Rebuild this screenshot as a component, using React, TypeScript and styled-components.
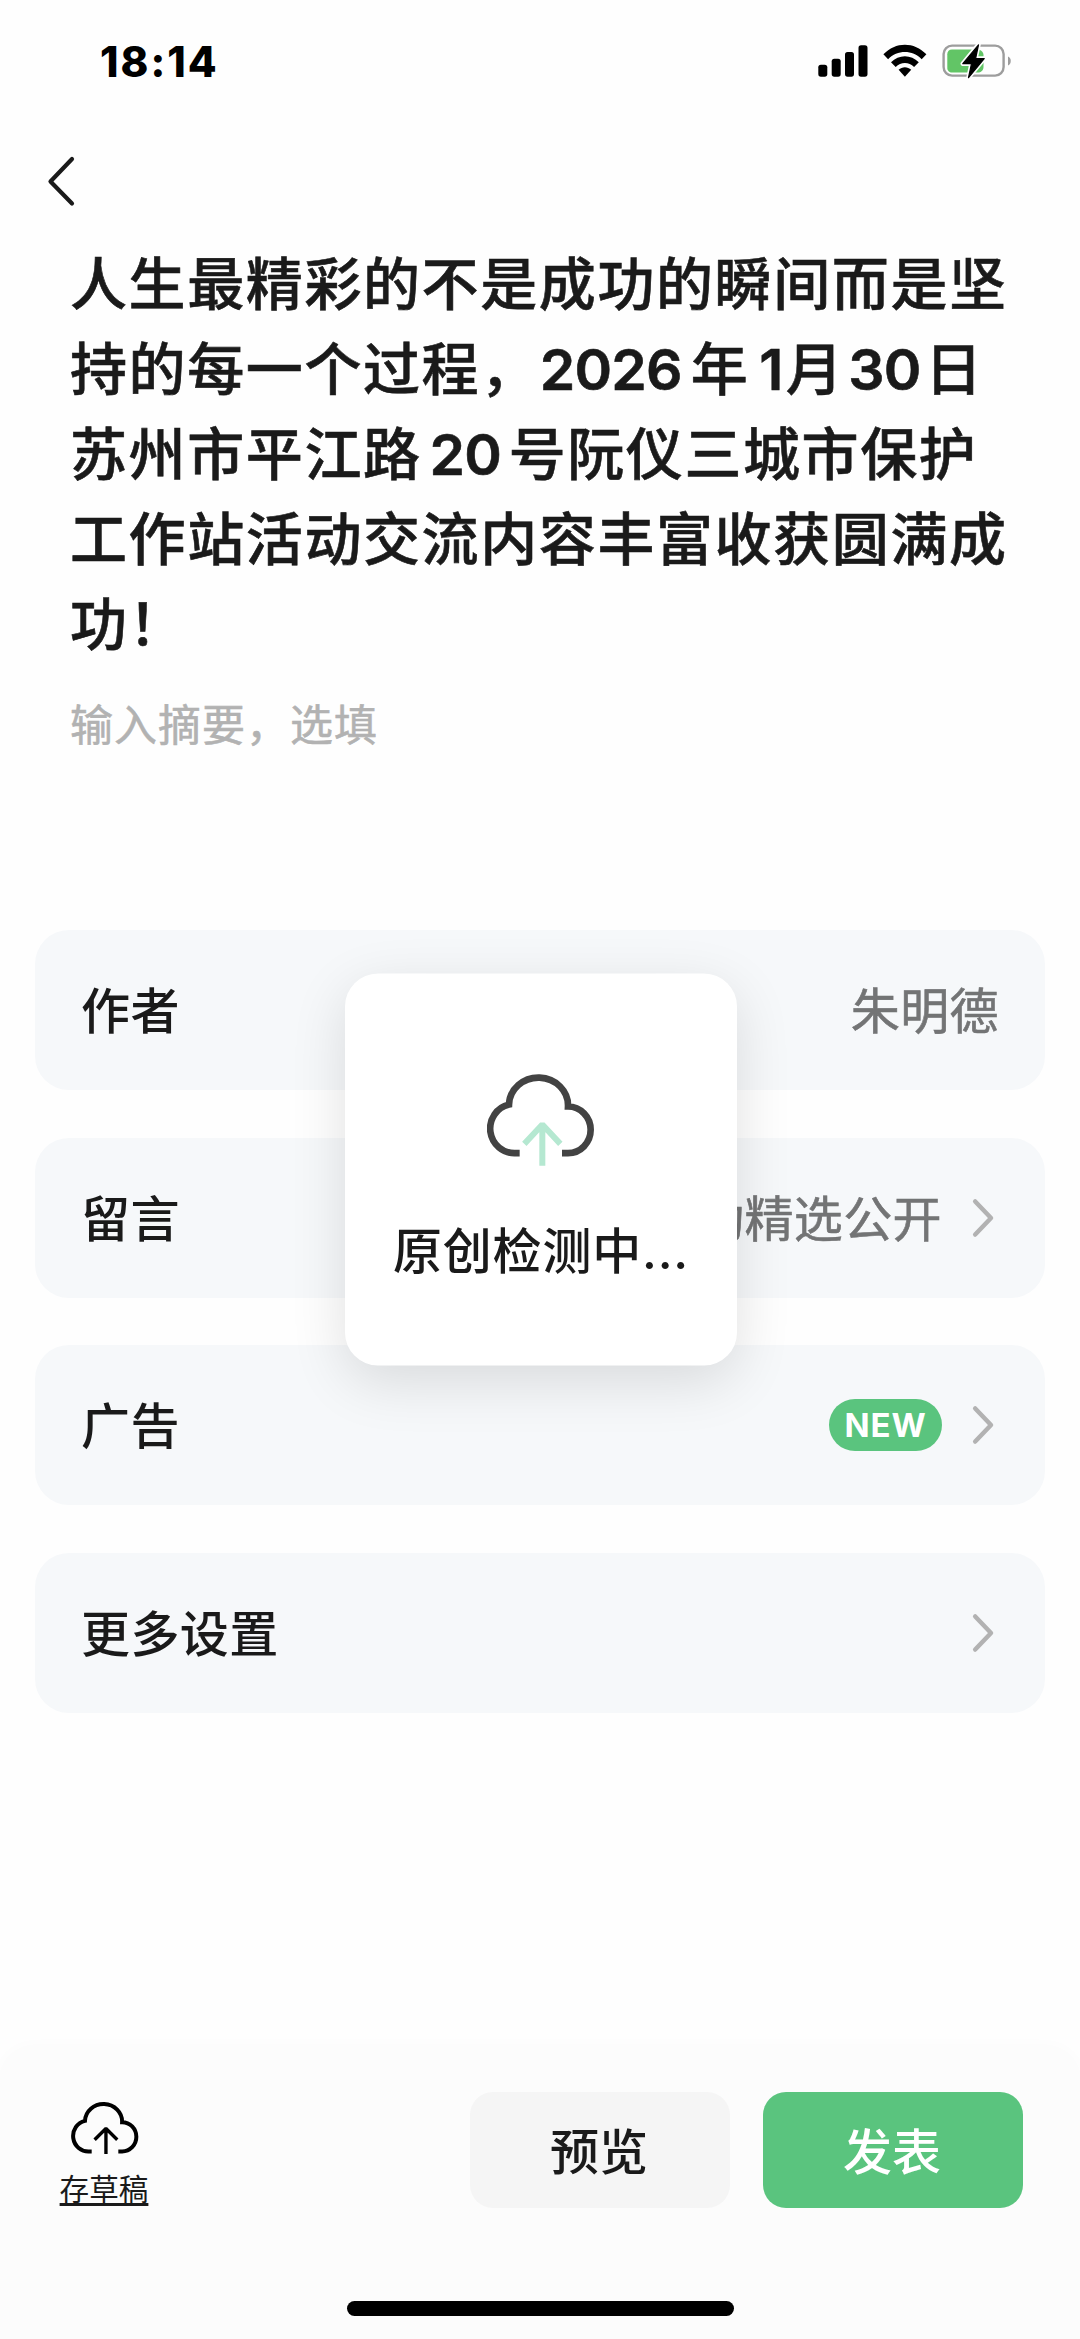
import React from "react";
import styled, { createGlobalStyle } from "styled-components";

const GlobalStyle = createGlobalStyle`
  * { box-sizing: border-box; }
  body {
    margin: 0;
    background: #fefefe;
    font-family: Inter, "Noto Sans CJK SC", sans-serif;
    color: #1a1a1a;
  }
`;

const Page = styled.div`
  position: relative;
  display: flex;
  flex-direction: column;
  width: 1080px;
  height: 2339px;
  overflow: hidden;
  background: #fefefe;
`;

const StatusBar = styled.header`
  display: flex;
  justify-content: space-between;
  height: 122px;
  padding: 44px 68px 0 100px;
  color: #000;
`;

const Clock = styled.time`
  font-size: 42px;
  font-weight: 800;
  line-height: 35px;
  letter-spacing: 2px;
`;

const StatusIcons = styled.div`
  display: flex;
  align-items: flex-start;
  gap: 15px;
`;

const NavBar = styled.nav`
  display: flex;
  height: 119.5px;
  padding: 33px 0 0 46px;
`;

const Article = styled.section`
  padding: 0 60px 0 70px;
  height: 688.5px;
`;

const Title = styled.h1`
  margin: 0;
  font-size: 57px;
  font-weight: 500;
  line-height: 85.2px;
  letter-spacing: 1.6px;
  white-space: nowrap;
  -webkit-text-stroke: 0.6px currentColor;
`;

const Digits = styled.span<{ $before?: number; $after?: number }>`
  font-weight: 600;
  letter-spacing: -0.8px;
  margin-left: ${(p) => p.$before ?? 0}px;
  margin-right: ${(p) => p.$after ?? 0}px;
`;

const Summary = styled.p`
  margin: 27px 0 0;
  font-size: 43px;
  line-height: 60px;
  letter-spacing: 1px;
  color: #b2b2b2;
  -webkit-text-stroke: 0.6px currentColor;
`;

const Settings = styled.ul`
  display: flex;
  flex-direction: column;
  gap: 47.6px;
  margin: 0;
  padding: 0 35px;
  list-style: none;
`;

const Row = styled.li<{ $plain?: boolean }>`
  display: flex;
  align-items: center;
  height: 160px;
  padding: 0 ${(p) => (p.$plain ? 46 : 50)}px 0 46px;
  border-radius: 34px;
  background: #f6f8fa;
  font-size: 49px;
  letter-spacing: 0.4px;
  line-height: 70px;
`;

const RowLabel = styled.span`
  flex: 1;
  padding-top: 4px;
  font-weight: 500;
`;

const RowValue = styled.span`
  padding-top: 4px;
  color: #737475;
  -webkit-text-stroke: 0.6px currentColor;
`;

const Badge = styled.span`
  display: flex;
  align-items: center;
  justify-content: center;
  width: 113px;
  height: 52px;
  border-radius: 26px;
  background: #5ac47e;
  color: #fff;
  font-size: 33px;
  font-weight: 650;
  letter-spacing: 0.8px;
`;

const RowChevron = styled.svg`
  width: 24px;
  height: 42px;
  margin-left: 29px;
`;

const Footer = styled.footer`
  display: flex;
  align-items: flex-start;
  height: 291px;
  margin-top: auto;
  padding: 44px 57px 0 59px;
  border-radius: 34px 34px 0 0;
  background: #fcfcfc;
  box-shadow: 0 -2px 16px rgba(0, 0, 0, 0.02);
`;

const DraftButton = styled.div`
  display: flex;
  flex-direction: column;
  align-items: center;
  width: 90px;
  padding-top: 9px;
  margin-right: auto;

  svg {
    margin-left: 2px;
  }
`;

const DraftLabel = styled.span`
  margin-top: 14px;
  font-size: 29.6px;
  line-height: 40px;
  text-decoration: underline;
  text-decoration-thickness: 2.6px;
  text-underline-offset: 2.5px;
  text-decoration-skip-ink: none;
`;

const ActionButton = styled.button<{ $primary?: boolean }>`
  width: 260px;
  height: 116px;
  margin-left: ${(p) => (p.$primary ? 33 : 0)}px;
  padding: 0 2px 4px 0;
  border: 0;
  border-radius: 23px;
  background: ${(p) => (p.$primary ? "#5ac47e" : "#f5f5f5")};
  color: ${(p) => (p.$primary ? "#fff" : "#1a1a1a")};
  font-family: inherit;
  font-size: 49px;
  font-weight: 500;
`;

const HomeIndicator = styled.div`
  position: absolute;
  left: 347px;
  bottom: 23px;
  width: 387px;
  height: 15px;
  border-radius: 8px;
  background: #000;
`;

const Toast = styled.div`
  position: absolute;
  left: 50%;
  top: 50%;
  transform: translate(-195px, -196.5px);
  display: flex;
  flex-direction: column;
  align-items: center;
  width: 392px;
  height: 392px;
  padding-top: 100px;
  border-radius: 33px;
  background: #fff;
  box-shadow: 0 16px 56px rgba(0, 0, 0, 0.12);
`;

const ToastText = styled.div`
  margin-top: 48px;
  font-size: 49px;
  font-weight: 500;
  line-height: 72px;
  letter-spacing: 0.8px;
  white-space: nowrap;
`;

const CLOUD =
  "M178 308H166A73 74 0 0 1 146 162A88 83 0 0 1 323 168A67 69 0 0 1 323 308H305";

function CloudLarge() {
  return (
    <svg width="108" height="94" viewBox="80 69 324 282" fill="none">
      <path d={CLOUD} stroke="#434343" strokeWidth="20" />
      <path
        d="M246 346V222M192 280L246 222L300 280"
        stroke="#b5e8d1"
        strokeWidth="18"
        strokeLinejoin="bevel"
      />
    </svg>
  );
}

function CloudSmall() {
  return (
    <svg width="68" height="54" viewBox="79.4 67.2 324.2 257.4" fill="none">
      <path d={CLOUD} stroke="#000" strokeWidth="19" />
      <path
        d="M246 320V200M192 252L246 198L300 252"
        stroke="#000"
        strokeWidth="16"
        strokeLinejoin="bevel"
      />
    </svg>
  );
}

function Chevron() {
  return (
    <RowChevron viewBox="0 0 24 42" fill="none">
      <path
        d="M4.200 4.500L20 21L4.200 37.500"
        stroke="#b2b2b2"
        strokeWidth="4.5"
        strokeLinecap="round"
        strokeLinejoin="round"
      />
    </RowChevron>
  );
}

function Signal() {
  return (
    <svg width="50" height="34" viewBox="0 0 50 34">
      <rect x="0.3" y="20.7" width="9" height="12" rx="2.6" />
      <rect x="13.7" y="14.7" width="9" height="18" rx="2.6" />
      <rect x="27" y="8" width="9" height="24.7" rx="2.6" />
      <rect x="40.5" y="1.3" width="9" height="31.4" rx="2.6" />
    </svg>
  );
}

function Wifi() {
  return (
    <svg width="44" height="34" viewBox="0 0 44 34">
      <path d="M0.4 10.3C12.4-2.6 31.4-2.6 43.4 10.3L38.7 15.2C29.6 5.5 14.2 5.5 5.1 15.2Z" />
      <path d="M8 18.2C15.7 10.1 28.1 10.1 35.8 18.2L31.1 23C26 17.7 17.8 17.7 12.7 23Z" />
      <path d="M15.6 25.8C19.2 22.4 24.6 22.4 28.2 25.8L21.9 32.7Z" />
    </svg>
  );
}

function Battery() {
  return (
    <svg width="70" height="36" viewBox="0 0 70 36">
      <rect x="1.6" y="1.6" width="60" height="30" rx="8.5" fill="none" stroke="#9d9d9d" strokeWidth="2.4" />
      <path d="M66 12.5C69.7 14 69.7 20 66 21.5Z" fill="#9d9d9d" />
      <path
        d="M10 5.5H35.5C39 5.5 41.5 8 41.5 11V23C41.5 26.5 39 28.6 35.5 28.6H10C7.2 28.6 5.3 26.5 5.3 24V10.2C5.3 7.5 7.2 5.5 10 5.5Z"
        fill="#62c566"
      />
      <path
        d="M36.5 0.5L20.8 19.7H29.5L26.5 33.7L42.2 14.5H33.6Z"
        fill="#fefefe"
        stroke="#fefefe"
        strokeWidth="4.5"
        strokeLinejoin="round"
      />
      <path
        d="M36.5 0.9L20.8 19.7H29.5L26.5 33.7L42.2 14.5H33.6Z"
        fill="#000"
        stroke="#000"
        strokeWidth="1.2"
        strokeLinejoin="round"
      />
    </svg>
  );
}

export default function App() {
  return (
    <>
      <GlobalStyle />
      <Page>
        <StatusBar>
          <Clock>18:14</Clock>
          <StatusIcons>
            <Signal />
            <Wifi />
            <Battery />
          </StatusIcons>
        </StatusBar>
        <NavBar>
          <svg width="30" height="52" viewBox="0 0 30 52" fill="none">
            <path
              d="M26 4L4.5 26.5L26 48.5"
              stroke="#1a1a1a"
              strokeWidth="4.2"
              strokeLinecap="round"
              strokeLinejoin="round"
            />
          </svg>
        </NavBar>
        <Article>
          <Title>
            人生最精彩的不是成功的瞬间而是坚
            <br />
            持的每一个过程，<Digits $before={1} $after={9}>2026</Digits>年
            <Digits $before={10} $after={3}>1</Digits>月
            <Digits $before={4} $after={4.5}>30</Digits>日
            <br />
            苏州市平江路<Digits $before={8} $after={7.5}>20</Digits>号阮仪三城市保护
            <br />
            工作站活动交流内容丰富收获圆满成
            <br />
            功！
          </Title>
          <Summary>输入摘要，选填</Summary>
        </Article>
        <Settings>
          <Row $plain>
            <RowLabel>作者</RowLabel>
            <RowValue>朱明德</RowValue>
          </Row>
          <Row>
            <RowLabel>留言</RowLabel>
            <RowValue>自动精选公开</RowValue>
            <Chevron />
          </Row>
          <Row>
            <RowLabel>广告</RowLabel>
            <Badge>NEW</Badge>
            <Chevron />
          </Row>
          <Row>
            <RowLabel>更多设置</RowLabel>
            <Chevron />
          </Row>
        </Settings>
        <Footer>
          <DraftButton>
            <CloudSmall />
            <DraftLabel>存草稿</DraftLabel>
          </DraftButton>
          <ActionButton>预览</ActionButton>
          <ActionButton $primary>发表</ActionButton>
        </Footer>
        <Toast role="status">
          <CloudLarge />
          <ToastText>原创检测中...</ToastText>
        </Toast>
        <HomeIndicator />
      </Page>
    </>
  );
}
